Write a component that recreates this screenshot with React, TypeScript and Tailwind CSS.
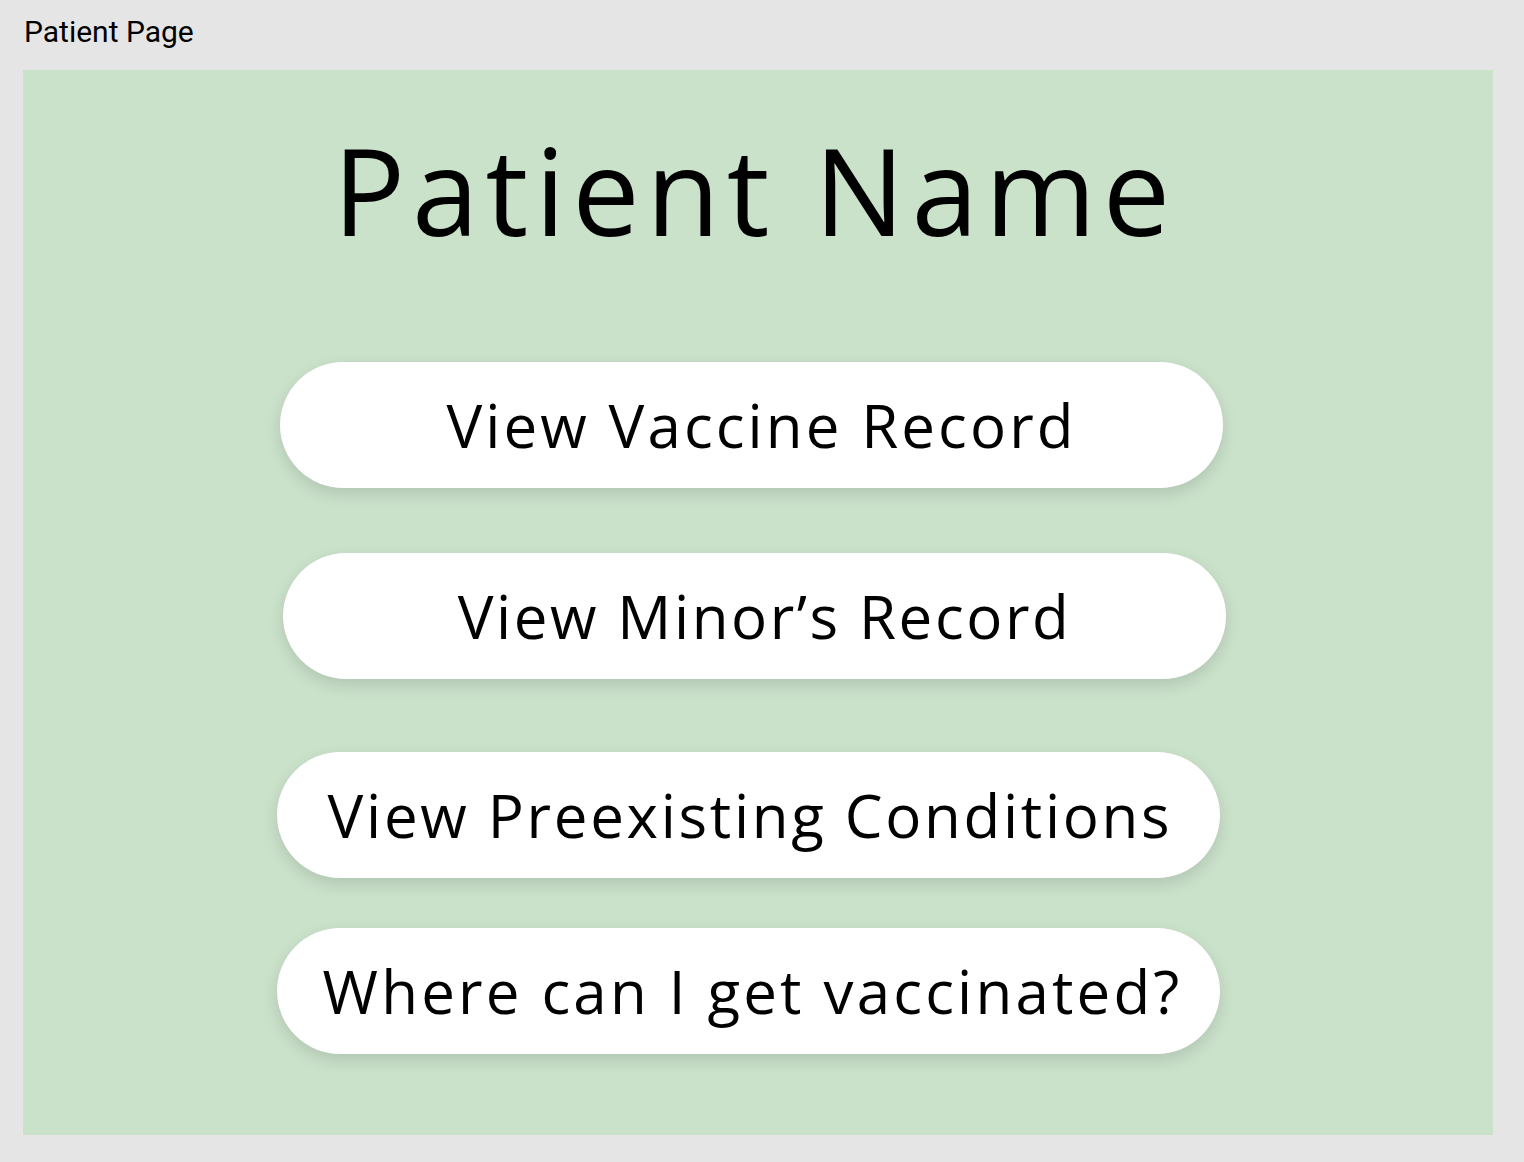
const buttons = [
  { label: "View Vaccine Record", cls: "ml-[257px] mt-[112px] pl-[20px] tracking-[3.1px]" },
  { label: "View Minor\u2019s Record", cls: "ml-[260px] mt-[65px] pl-[20px] tracking-[2.6px]" },
  { label: "View Preexisting Conditions", cls: "ml-[254px] mt-[73px] pl-[3px] tracking-[2.7px]" },
  { label: "Where can I get vaccinated?", cls: "ml-[254px] mt-[50px] pl-[8px] tracking-[3.2px]" },
]

export default function App() {
  return (
    <div className="min-h-screen bg-[#e5e5e5] px-[23px] pt-[17px] pb-[27px]">
      <div className="pl-[1px] text-[30px] leading-none text-black font-['Roboto',sans-serif]">
        Patient Page
      </div>
      <div className="mt-[23px] h-[1065px] w-[1470px] bg-[#cae1ca] pt-[60px] font-['Open_Sans',sans-serif] text-black">
        <h1 className="text-center text-[120px] font-normal leading-none tracking-[6.8px] pr-[6px]">
          Patient Name
        </h1>
        <div className="flex flex-col items-start">
          {buttons.map((b) => (
            <button
              key={b.label}
              className={`flex h-[126px] w-[943px] items-center justify-center rounded-full bg-white text-[60px] leading-none shadow-[0_6px_16px_rgba(0,0,0,0.12)] ${b.cls}`}
            >
              {b.label}
            </button>
          ))}
        </div>
      </div>
    </div>
  )
}
